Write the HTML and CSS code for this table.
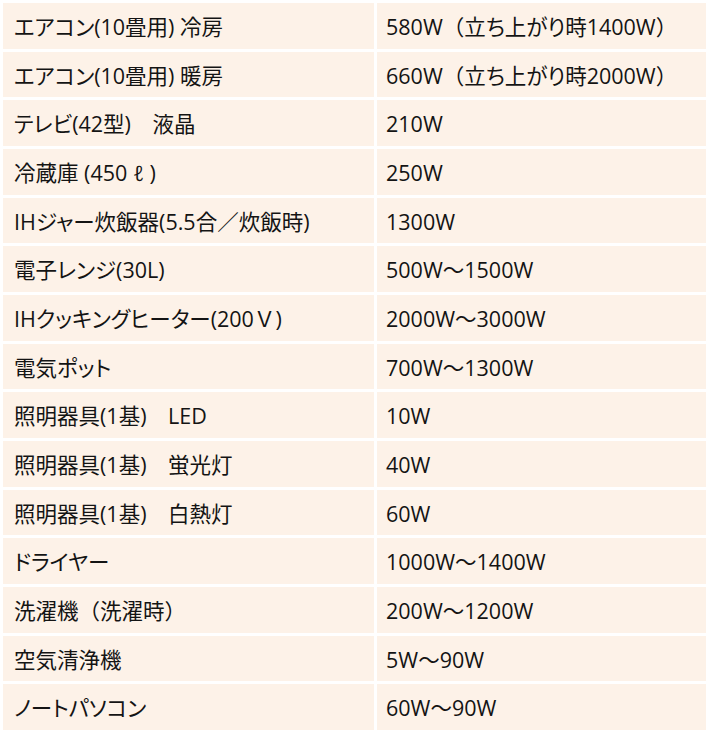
FILE: index.html
```html
<!DOCTYPE html>
<html lang="ja">
<head>
<meta charset="utf-8">
<link rel="stylesheet" href="styles.css">
</head>
<body>
<table class="power">
  <tbody>
    <tr><td class="item">エアコン(10畳用) 冷房</td><td class="watt">580W<span class="fw">（</span>立ち上がり時1400W<span class="fw">）</span></td></tr>
    <tr><td class="item">エアコン(10畳用) 暖房</td><td class="watt">660W<span class="fw">（</span>立ち上がり時2000W<span class="fw">）</span></td></tr>
    <tr><td class="item">テレビ(42型)<span class="fw">　</span>液晶</td><td class="watt">210W</td></tr>
    <tr><td class="item">冷蔵庫 (450 ℓ )</td><td class="watt">250W</td></tr>
    <tr><td class="item">IHジャー炊飯器(5.5合<span class="fw">／</span>炊飯時)</td><td class="watt">1300W</td></tr>
    <tr><td class="item">電子レンジ(30L)</td><td class="watt">500W<span class="fw">～</span>1500W</td></tr>
    <tr><td class="item">IHクッキングヒーター(200<span class="fw">Ｖ</span>)</td><td class="watt">2000W<span class="fw">～</span>3000W</td></tr>
    <tr><td class="item">電気ポット</td><td class="watt">700W<span class="fw">～</span>1300W</td></tr>
    <tr><td class="item">照明器具(1基)<span class="fw">　</span>LED</td><td class="watt">10W</td></tr>
    <tr><td class="item">照明器具(1基)<span class="fw">　</span>蛍光灯</td><td class="watt">40W</td></tr>
    <tr><td class="item">照明器具(1基)<span class="fw">　</span>白熱灯</td><td class="watt">60W</td></tr>
    <tr><td class="item">ドライヤー</td><td class="watt">1000W<span class="fw">～</span>1400W</td></tr>
    <tr><td class="item">洗濯機<span class="fw">（</span>洗濯時<span class="fw">）</span></td><td class="watt">200W<span class="fw">～</span>1200W</td></tr>
    <tr><td class="item">空気清浄機</td><td class="watt">5W<span class="fw">～</span>90W</td></tr>
    <tr><td class="item">ノートパソコン</td><td class="watt">60W<span class="fw">～</span>90W</td></tr>
  </tbody>
</table>
</body>
</html>
```

FILE: styles.css
```css
html, body {
  margin: 0;
  padding: 0;
  background: #ffffff;
}

body {
  font-family: "Open Sans", "Noto Sans CJK JP", sans-serif;
  color: #141414;
}

.power {
  border-collapse: separate;
  border-spacing: 3px;
  width: 709px;
  table-layout: fixed;
}

.power td {
  background: #fdf2e8;
  height: 43.67px;
  padding: 2px 0 0;
  font-size: 21.5px;
  line-height: 1;
  vertical-align: middle;
  white-space: nowrap;
  font-feature-settings: "palt" 1;
}

.power .item {
  width: 360px;
  padding-left: 11px;
}

.power .watt {
  padding-left: 9px;
}

.fw {
  font-feature-settings: normal;
}
```
